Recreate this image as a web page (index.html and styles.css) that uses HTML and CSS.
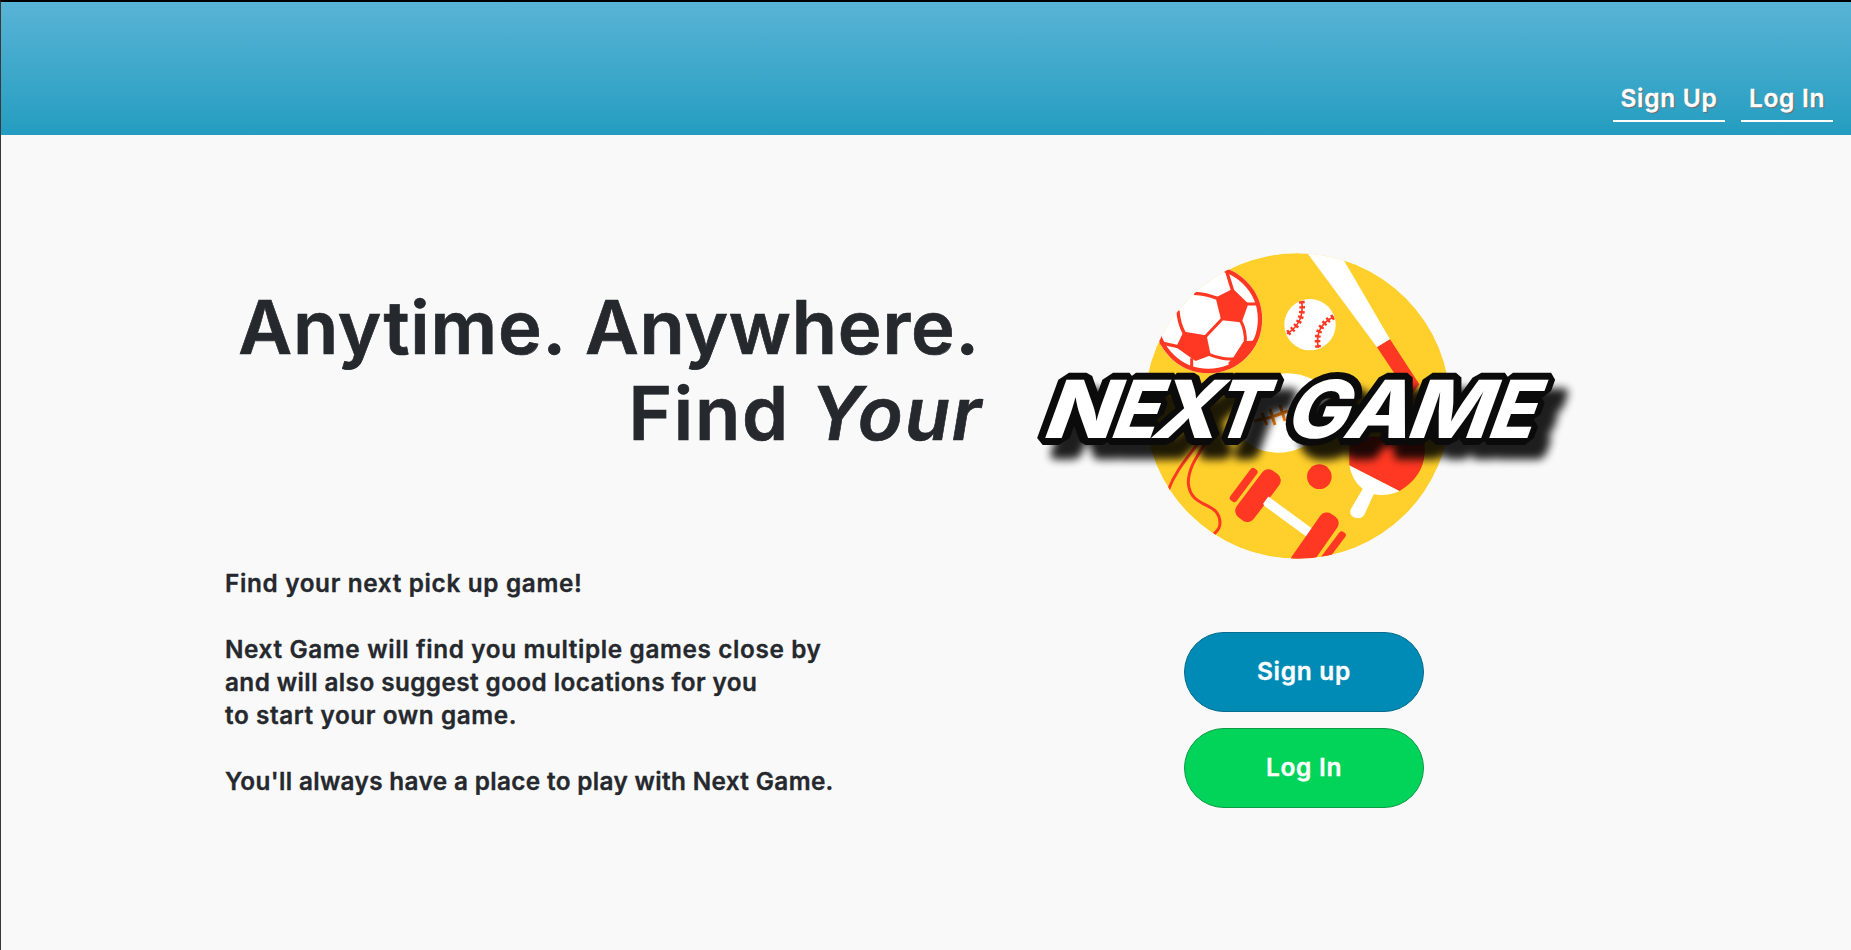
FILE: index.html
```html
<!DOCTYPE html>
<html lang="en">
<head>
<meta charset="utf-8">
<title>Next Game</title>
<link rel="stylesheet" href="styles.css">
</head>
<body>
<header class="topbar">
  <nav class="nav">
    <a class="nav-link nav-signup" href="#">Sign Up</a>
    <a class="nav-link nav-login" href="#">Log In</a>
  </nav>
</header>
<main class="landing">
  <section class="intro">
    <h1 class="title"><span class="title-main">Anytime. Anywhere.</span><span class="title-sub">Find <em>Your</em></span></h1>
    <div class="copy">
      <p><span class="l1">Find your next pick up game!</span></p>
      <p><span class="l2">Next Game will find you multiple games close by</span><span class="l3">and will also suggest good locations for you</span><span class="l4">to start your own game.</span></p>
      <p><span class="l5">You'll always have a place to play with Next Game.</span></p>
    </div>
  </section>
  <section class="side">
    <svg class="logo" viewBox="1030 245 550 320" width="550" height="320" role="img" aria-label="Next Game">
      <defs>
        <clipPath id="disc"><circle cx="1297.5" cy="406" r="152.8"/></clipPath>
        <clipPath id="ball"><circle cx="565" cy="268" r="160"/></clipPath>
        <filter id="soft" x="-10%" y="-40%" width="120%" height="180%"><feGaussianBlur stdDeviation="4"/></filter>
      </defs>
      <g clip-path="url(#disc)">
        <circle cx="1297.5" cy="406" r="153" fill="#ffd02b"/>
        <g transform="translate(1020 230) scale(.33333)">
          <circle cx="565" cy="268" r="162" fill="#fff"/>
          <g clip-path="url(#ball)" fill="#ff3823" stroke="#ff3823" stroke-width="9" stroke-linejoin="round">
            <path d="M638 182L680 222L662 272L607 266L592 205Z"/>
            <path d="M493 310L556 320L567 373L527 388L474 350Z"/>
            <path d="M674 338L700 336L735 300L730 370L650 425L630 400L645 383Z"/>
            <path fill="none" d="M680 222H722M607 266L556 320M515 385V420M567 373Q610 390 640 386M662 272Q678 300 676 340"/>
          </g>
          <circle cx="565" cy="268" r="155" fill="none" stroke="#ff3823" stroke-width="13"/>
          <path d="M613 116Q480 150 410 325L370 300L430 110Z" fill="#fff"/>
          <path d="M638 182L618 118M592 205Q560 192 522 190M493 310Q476 280 474 242M474 350L420 338" fill="none" stroke="#ff3823" stroke-width="10"/>
        </g>
        <g transform="translate(1280 230) scale(.33333)">
          <circle cx="90" cy="284" r="77" fill="#fff"/>
          <g fill="none" stroke="#ff3823">
            <path stroke-width="5" d="M65 213Q75 278 21 311M161 260Q102 290 115 354"/>
            <path stroke-width="17" stroke-dasharray="7 8" d="M65 213Q75 278 21 311M161 260Q102 290 115 354"/>
          </g>
          <path d="M78 64L188 85L330 328L291 352Z" fill="#fff"/>
          <path d="M330 328L418 463L390 500L291 352Z" fill="#ff3823"/>
        </g>
        <ellipse cx="1283" cy="413" rx="48" ry="39" transform="rotate(-15 1283 413)" fill="#fff"/>
        <path d="M1254 421l18-4 16-6M1262 413l5 12M1270 409l5 16M1280 405l5 16" fill="none" stroke="#f07c10" stroke-width="3"/>
        <g transform="translate(1020 360) scale(.33333)">
          <g fill="none" stroke="#ff3823" stroke-width="9">
            <path d="M550 230C475 325 460 350 445 390M575 220C530 290 504 325 505 370C512 450 600 420 600 490Q600 507 582 522"/>
          </g>
          <path d="M738 424L865 517" fill="none" stroke="#fff" stroke-width="28"/>
          <g fill="#ff3823">
            <rect x="-12" y="-60" width="24" height="120" rx="10" transform="translate(671 375) rotate(37)"/>
            <rect x="-32" y="-87" width="64" height="174" rx="24" transform="translate(714 407) rotate(37)"/>
          </g>
        </g>
        <g transform="translate(1280 360) scale(.33333)">
          <circle cx="118" cy="350" r="37" fill="#ff3823"/>
          <path d="M-43 421L90 518" stroke="#fff" stroke-width="28"/>
          <g fill="#ff3823">
            <rect x="-31" y="-87" width="62" height="195" rx="24" transform="translate(110 537) rotate(35)"/>
            <rect x="-11" y="-60" width="22" height="130" rx="9" transform="translate(156 565) rotate(37)"/>
          </g>
          <path d="M208 315Q215 360 248 387L213 446Q205 463 222 472Q243 481 254 462L281 403Q325 409 359 393Z" fill="#fff"/>
          <path d="M208 230H434V280Q430 350 359 393L208 316Z" fill="#ff3823"/>
        </g>
      </g>
      <g class="wordmark-shadow" filter="url(#soft)" transform="translate(13 15)"><use href="#lettering"/></g>
      <g class="wordmark-edge"><use href="#lettering"/></g>
      <g class="wordmark">
        <g id="lettering" transform="translate(-1 437.5) skewX(-20)">
          <text x="1041" textLength="71" lengthAdjust="spacingAndGlyphs">N</text>
          <text x="1109" textLength="46" lengthAdjust="spacingAndGlyphs">E</text>
          <text x="1150" textLength="65" lengthAdjust="spacingAndGlyphs">X</text>
          <text x="1210" textLength="50" lengthAdjust="spacingAndGlyphs">T</text>
          <text x="1283" textLength="62" lengthAdjust="spacingAndGlyphs">G</text>
          <text x="1342" textLength="66" lengthAdjust="spacingAndGlyphs">A</text>
          <text x="1405" textLength="82" lengthAdjust="spacingAndGlyphs">M</text>
          <text x="1486" textLength="46" lengthAdjust="spacingAndGlyphs">E</text>
        </g>
      </g>
    </svg>
    <div class="actions">
      <a class="btn btn-blue" href="#">Sign up</a>
      <a class="btn btn-green" href="#">Log In</a>
    </div>
  </section>
</main>
</body>
</html>
```
FILE: styles.css
```css
* { box-sizing: border-box; }
body {
  margin: 0;
  height: 950px;
  overflow: hidden;
  background: #f9f9f9;
  border-top: 2px solid #000;
  border-left: 1px solid #3b3938;
  color: #25282d;
  font-family: Inter, "Liberation Sans", sans-serif;
  font-weight: 600;
}
a { color: #fff; text-decoration: none; }
.topbar {
  height: 133px;
  display: flex;
  justify-content: flex-end;
  align-items: flex-end;
  padding: 0 18px 13px 0;
  background: linear-gradient(#59b4d6, #249dc0);
}
.nav { display: flex; gap: 16px; }
.nav-link {
  height: 44px;
  line-height: 40px;
  font-size: 24.5px;
  letter-spacing: .7px;
  text-align: center;
  border-bottom: 2px solid #fff;
  text-shadow: 1px 1px 1px #7a5a5a;
}
.nav-link, .btn, .copy { -webkit-text-stroke: .35px currentColor; }
.nav-signup { width: 112px; }
.nav-login { width: 92px; }
.landing { display: grid; grid-template-columns: 1029px 550px; }
.intro { padding: 149px 0 0 224px; }
.title {
  margin: 0;
  width: 762px;
  display: flex;
  flex-direction: column;
  align-items: flex-end;
  font-size: 74px;
  line-height: 86px;
  font-weight: 600;
  white-space: nowrap;
  -webkit-text-stroke: .7px currentColor;
}
.title-main { margin-right: 7px; letter-spacing: .82px; }
.title-sub { margin-right: 4px; letter-spacing: 1.8px; }
.copy { margin-top: 111px; font-size: 24.3px; line-height: 33px; white-space: nowrap; }
.copy p { margin: 0 0 33px; }
.copy span { display: block; }
.l1 { letter-spacing: .67px; }
.l2 { letter-spacing: .64px; }
.l3 { letter-spacing: .42px; }
.l4 { letter-spacing: .6px; }
.l5 { letter-spacing: .36px; }
.side { padding-top: 110px; }
.logo { display: block; overflow: visible; }
.logo text { font-family: Inter, sans-serif; font-weight: 800; font-size: 80px; }
.wordmark { fill: #fff; }
.wordmark-edge { fill: #0b0b0b; stroke: #0b0b0b; stroke-width: 14px; stroke-linejoin: bevel; }
.wordmark-shadow { fill: #000; stroke: #000; stroke-width: 13px; stroke-linejoin: round; opacity: .88; }
.actions { width: 240px; margin: 67px 0 0 154px; display: flex; flex-direction: column; gap: 16px; }
.btn {
  height: 80px;
  line-height: 76px;
  border-radius: 40px;
  border: 1px solid #006a8d;
  text-align: center;
  font-size: 24.5px;
  letter-spacing: .7px;
}
.btn-blue { background: #008bb7; }
.btn-green { background: #02d45a; border-color: #0a9b47; }
```
